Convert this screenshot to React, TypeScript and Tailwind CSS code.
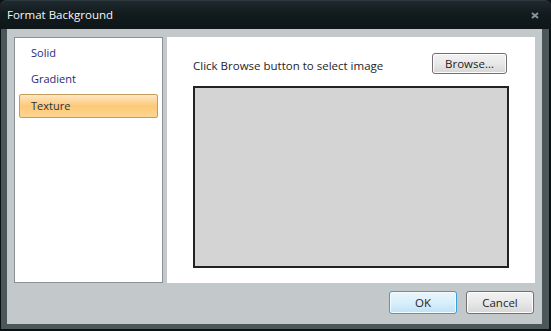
import React from 'react';

const font = "font-['Segoe_UI','Open_Sans',sans-serif]";

function ListItem({ label, selected }: { label: string; selected?: boolean }) {
  if (selected) {
    return (
      <div className="mx-[4px] mt-[1px] flex h-[24px] items-center rounded-[2px] border border-[#c49c5c] bg-gradient-to-b from-[#fee6c2] via-[#fcc977] to-[#fdd590] pl-[11px] text-[11px] text-[#2b2f3a]">
        {label}
      </div>
    );
  }
  return (
    <div className="mx-[4px] flex h-[24px] items-center pl-[12px] text-[11px] text-[#1c2c7c]">
      {label}
    </div>
  );
}

export default function App() {
  return (
    <div className={`w-[551px] h-[331px] flex flex-col bg-[#0b1113] ${font}`}>
      {/* Title bar */}
      <div className="h-[29px] shrink-0 flex items-center justify-between rounded-t-[6px] bg-gradient-to-b from-[#1f2a2f] via-[#111a1d] to-[#0e1618] border-t border-[#2c383d] pl-[7px] pr-[12px]">
        <span className="text-[11.5px] text-[#f6f8f9] leading-none pb-[1px]">Format Background</span>
        <svg width="8" height="7" viewBox="0 0 8 7" className="mt-[1px]">
          <path d="M1 1 L7 6 M7 1 L1 6" stroke="#8494a0" strokeWidth="2" />
        </svg>
      </div>

      {/* Frame */}
      <div className="flex-1 flex flex-col pl-[1px] pr-[2px] pb-[2px]">
        <div className="flex-1 flex flex-col bg-[#c3c8ca] border-l-[6px] border-r-[7px] border-b-[5px] border-[#4b5759]">
          <div className="flex gap-[4px] pl-[7px] pt-[8px]">
            {/* Category list */}
            <div className="w-[149px] h-[246px] bg-white border border-[#8b9197] flex flex-col pt-[3px] gap-[2px]">
              <ListItem label="Solid" />
              <ListItem label="Gradient" />
              <ListItem label="Texture" selected />
            </div>

            {/* Texture panel */}
            <div className="w-[368px] h-[246px] bg-white pl-[26px] pt-[16px]">
              <div className="w-[316px] flex items-end justify-between">
                <span className="text-[11.5px] leading-[16px] text-[#1e1e1e]">Click Browse button to select image</span>
                <button className="mr-[2px] w-[75px] h-[21px] rounded-[3px] border border-[#707070] bg-gradient-to-b from-[#f3f3f3] via-[#e8e8e8] to-[#d6d6d6] text-[11.5px] text-[#1e1e1e] shadow-[inset_0_0_0_1px_#fcfcfc]">
                  Browse...
                </button>
              </div>
              <div className="mt-[12px] w-[316px] h-[182px] border-2 border-[#222] bg-[#d4d4d4]" />
            </div>
          </div>

          {/* Footer buttons */}
          <div className="flex justify-end gap-[9px] pr-[8px] pt-[8px]">
            <button className="w-[68px] h-[23px] rounded-[3px] border border-[#3c9ed6] bg-gradient-to-b from-[#eaf6fd] via-[#d9effb] to-[#bde2f6] text-[11.5px] text-[#1e1e1e] shadow-[inset_0_0_0_1px_#f4fbff]">
              OK
            </button>
            <button className="w-[68px] h-[23px] rounded-[3px] border border-[#707070] bg-gradient-to-b from-[#f3f3f3] via-[#e8e8e8] to-[#d6d6d6] text-[11.5px] text-[#1e1e1e] shadow-[inset_0_0_0_1px_#fcfcfc]">
              Cancel
            </button>
          </div>
        </div>
      </div>
    </div>
  );
}
